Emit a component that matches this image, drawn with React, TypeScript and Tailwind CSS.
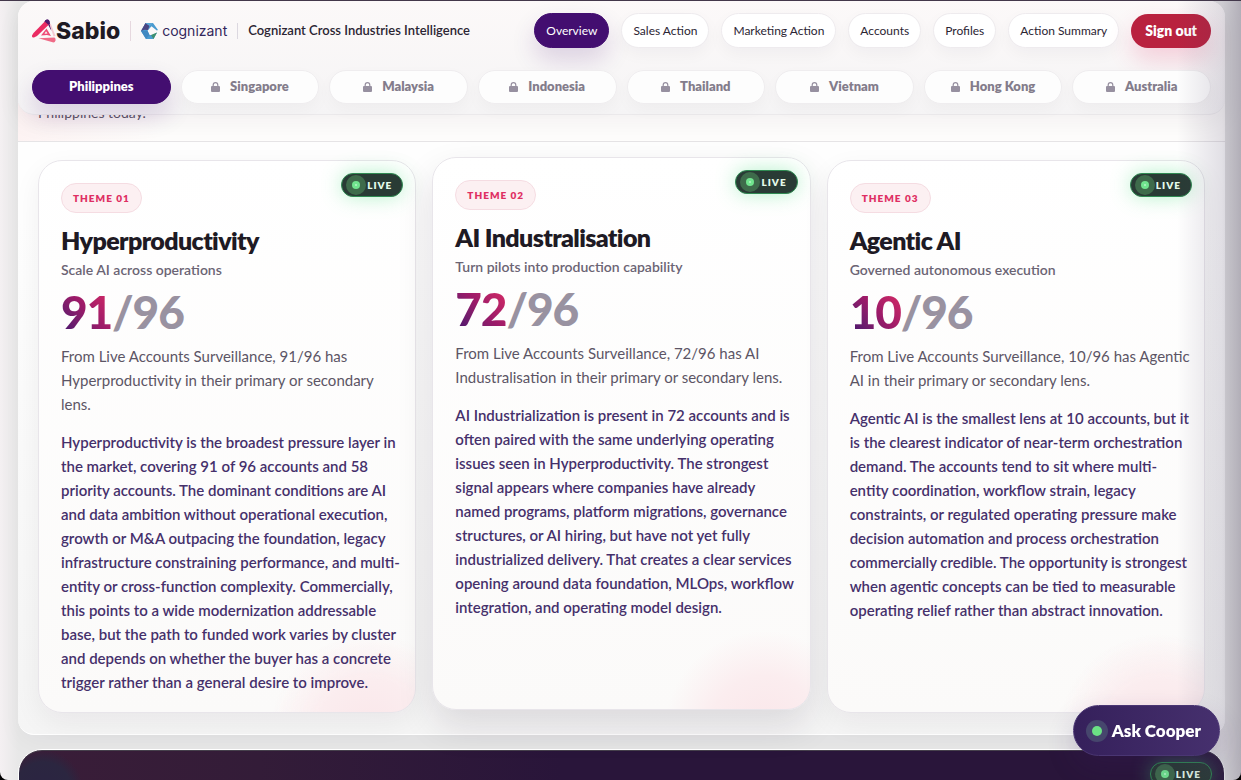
type Theme = {
  tag: string;
  title: string;
  subtitle: string;
  count: number;
  summary: string;
  detail: string;
  raised?: boolean;
};

const NAV = ["Overview", "Sales Action", "Marketing Action", "Accounts", "Profiles", "Action Summary"];
const MARKETS = ["Philippines", "Singapore", "Malaysia", "Indonesia", "Thailand", "Vietnam", "Hong Kong", "Australia"];

// Copy keeps its own line breaks, rendered with whitespace-pre-line
const THEMES: Theme[] = [
  {
    tag: "THEME 01",
    title: "Hyperproductivity",
    subtitle: "Scale AI across operations",
    count: 91,
    summary: `From Live Accounts Surveillance, 91/96 has
Hyperproductivity in their primary or secondary
lens.`,
    detail: `Hyperproductivity is the broadest pressure layer in
the market, covering 91 of 96 accounts and 58
priority accounts. The dominant conditions are AI
and data ambition without operational execution,
growth or M&A outpacing the foundation, legacy
infrastructure constraining performance, and multi-
entity or cross-function complexity. Commercially,
this points to a wide modernization addressable
base, but the path to funded work varies by cluster
and depends on whether the buyer has a concrete
trigger rather than a general desire to improve.`,
  },
  {
    tag: "THEME 02",
    title: "AI Industralisation",
    subtitle: "Turn pilots into production capability",
    count: 72,
    summary: `From Live Accounts Surveillance, 72/96 has AI
Industralisation in their primary or secondary lens.`,
    detail: `AI Industrialization is present in 72 accounts and is
often paired with the same underlying operating
issues seen in Hyperproductivity. The strongest
signal appears where companies have already
named programs, platform migrations, governance
structures, or AI hiring, but have not yet fully
industrialized delivery. That creates a clear services
opening around data foundation, MLOps, workflow
integration, and operating model design.`,
    raised: true,
  },
  {
    tag: "THEME 03",
    title: "Agentic AI",
    subtitle: "Governed autonomous execution",
    count: 10,
    summary: `From Live Accounts Surveillance, 10/96 has Agentic
AI in their primary or secondary lens.`,
    detail: `Agentic AI is the smallest lens at 10 accounts, but it
is the clearest indicator of near-term orchestration
demand. The accounts tend to sit where multi-
entity coordination, workflow strain, legacy
constraints, or regulated operating pressure make
decision automation and process orchestration
commercially credible. The opportunity is strongest
when agentic concepts can be tied to measurable
operating relief rather than abstract innovation.`,
  },
];

function SabioLogo() {
  return (
    <div className="flex items-center">
      <svg viewBox="0 0 24 24" className="size-6" aria-hidden="true">
        <path d="M12.500 2.500q.8-2 2.700-2 2 0 2.400 2.200L19.500 12l-3.500-6.500-3.500 3z" fill="#4f1a6e" />
        <path d="M12.800 2.600L17 5.500 5 17 2 18.500Q-.3 19 0 16.500L1.500 14z" fill="#ea2c63" />
        <path d="M12.800 2.600q.8-2 2.500-2 2 0 2.400 2.300L16.500 6z" fill="#4f1a6e" />
        <path d="M17.500 5l1.300-.2L23.500 17l-2 .5z" fill="#f5c9d2" />
        <path d="M14.500 9.500l4.500 7.500-4-1-6 .5z" fill="#ee4b76" />
        <path d="M14 12.300l1.500 2.300-3 .1z" fill="#fbf9f8" />
        <path d="M6.500 19.300l16-.8q1.500.8 1 3-.5 2-2 2z" fill="#ef6b87" />
      </svg>
      <span className="font-[Inter] text-[23px] leading-7 font-extrabold text-[#1e1a24]">Sabio</span>
    </div>
  );
}

function CognizantLogo() {
  return (
    <div className="flex items-center gap-1">
      <svg viewBox="0 0 17 16" className="h-4 w-[17px]" aria-hidden="true">
        <path d="M4.500 0H12l5 7-1.200.5L10.500 3.200 6.500 7.800l2 4.200h3L16 9.500 12.500 16H5L0 8z" fill="#4a9bd0" />
        <path d="M4.500 0L0 8l3.500-1.200L7 7l1.500-4.500z" fill="#4b4583" />
        <path d="M4.500 0H12L8.500 3z" fill="#5ba6d6" />
        <path d="M0 8l5 8 3.500-4-2-4.200z" fill="#4189c2" />
        <path d="M16 9.500L12.500 16 10 12z" fill="#3d8f6d" />
      </svg>
      <span className="font-[Inter] text-sm text-[#33275c]">cognizant</span>
    </div>
  );
}

function LockIcon() {
  return (
    <svg viewBox="0 0 9 10" className="h-2.5 w-[9px]" aria-hidden="true">
      <path d="M2.200 4.500V3a2.300 2.300 0 0 1 4.600 0v1.500" fill="none" stroke="#9790a0" strokeWidth="1.200" />
      <rect y="4" width="9" height="6" rx="1" fill="#9790a0" />
    </svg>
  );
}

function LiveBadge() {
  return (
    <span className="flex h-6 items-center rounded-full border border-[#2f8a52] bg-[#293b35] pr-2.5 pl-1 text-[10px] font-extrabold tracking-widest text-[#e4fbea] shadow-[0_0_20px_rgba(74,222,128,0.4)]">
      <span className="flex size-5 items-center justify-center rounded-full bg-[#3e6b4b]">
        <span className="flex size-2 items-center justify-center rounded-full bg-[#70e48e]">
          <span className="size-0.5 rounded-full bg-[#b6f5c6]" />
        </span>
      </span>
      <span className="ml-px leading-3">LIVE</span>
    </span>
  );
}

function ThemeCard({ theme }: { theme: Theme }) {
  return (
    <article
      className={`relative rounded-3xl border border-[#e8e5ea] bg-[radial-gradient(circle_at_88%_104%,#fae6e9_0,#fbedef_55px,transparent_100px),linear-gradient(#ffffff,#fbfaf9)] pt-[22px] pr-3 pb-[18px] pl-[22px] ${
        theme.raised ? "-translate-y-[3px] shadow-[0_16px_36px_rgba(30,20,40,0.12)]" : "shadow-[0_10px_28px_rgba(30,20,40,0.06)]"
      }`}
    >
      <div className="absolute top-3 right-3">
        <LiveBadge />
      </div>
      <span className="flex h-[30px] w-fit items-center rounded-full border border-[#f5dce2] bg-[#fcf0f2] px-[11px] text-[10px] font-extrabold tracking-widest text-[#df2f63]">
        {theme.tag}
      </span>
      <h2 className="mt-[11px] text-[25px] leading-8 font-extrabold tracking-tight text-[#1e1a24]">{theme.title}</h2>
      <p className="mt-1 text-sm font-semibold text-[#6b6474]">{theme.subtitle}</p>
      <p className="mt-2 text-[46px] leading-12 font-black tracking-tight text-[#9992a1]">
        <span className="bg-linear-to-tr from-[#3c0c6e] via-[#9a1a69] to-[#e22c62] bg-clip-text text-transparent">
          {theme.count}
        </span>
        /96
      </p>
      <p className="mt-2 text-[15px] leading-6 whitespace-pre-line text-[#5c5565]">{theme.summary}</p>
      <p className="mt-3.5 text-[15px] leading-6 font-semibold whitespace-pre-line text-[#45306b]">{theme.detail}</p>
    </article>
  );
}

export default function App() {
  return (
    <div className="h-screen overflow-hidden bg-black">
      <div className="relative h-full overflow-hidden rounded-b-lg border-t border-[#43384b] bg-[linear-gradient(to_right,#f4f0f2,#e8e8e8_18px)] pr-4 pl-[18px] font-[Lato,sans-serif]">
        <div className="rounded-2xl border-b border-white bg-linear-to-b from-[#fefefe] from-30% to-[#f5f5f5] shadow-[0_8px_24px_rgba(30,20,40,0.04)]">
          <header className="relative z-10 rounded-2xl border-b border-[#ebe9eb] bg-linear-to-b from-[#fcf9f9] to-[#f5f4f5] px-3.5 pt-3 pb-2.5 shadow-[0_8px_24px_rgba(30,20,40,0.05)]">
            <div className="flex items-center justify-between">
              <div className="flex items-center">
                <SabioLogo />
                <span className="mx-2.5 h-5 w-px bg-[#e6d8df]" />
                <CognizantLogo />
                <span className="mx-2.5 h-4 w-px bg-[#dcd8e0]" />
                <span className="text-[13px] font-semibold text-[#2b2533]">Cognizant Cross Industries Intelligence</span>
              </div>
              <nav className="flex items-center gap-3" aria-label="Sections">
                {NAV.map((item, i) => (
                  <button
                    key={item}
                    type="button"
                    className={`h-[35px] rounded-full border px-[11px] text-xs ${
                      i === 0
                        ? "border-[#430e70] bg-[#430e70] text-white shadow-[0_12px_24px_rgba(67,14,112,0.16)]"
                        : "border-[#eeebee] bg-white text-[#2b2533] shadow-[0_6px_16px_rgba(30,20,40,0.04)]"
                    }`}
                  >
                    {item}
                  </button>
                ))}
                <button
                  type="button"
                  className="h-[34px] rounded-full bg-[#b9223f] px-3.5 text-sm font-extrabold text-white shadow-[0_12px_24px_rgba(226,44,98,0.2)]"
                >
                  Sign out
                </button>
              </nav>
            </div>
            <nav className="mt-[22px] grid grid-cols-8 gap-2.5" aria-label="Markets">
              {MARKETS.map((market, i) => (
                <button
                  key={market}
                  type="button"
                  disabled={i > 0}
                  className={`flex h-[34px] items-center justify-center gap-2.5 rounded-full border text-[13px] font-extrabold ${
                    i === 0
                      ? "border-[#430e70] bg-[#430e70] text-white shadow-[0_12px_24px_rgba(67,14,112,0.16)]"
                      : "border-[#efedef] bg-[#fdfdfd] text-[#837c8b] shadow-[0_6px_16px_rgba(30,20,40,0.03)]"
                  }`}
                >
                  {i > 0 && <LockIcon />}
                  {market}
                </button>
              ))}
            </nav>
          </header>
          <section className="-mt-3 h-[39px] border-b border-[#e6e4e6] bg-[linear-gradient(to_right,#fdf3f3,#fefdfc_140px)] px-5">
            <p className="text-sm text-[#5c5565]">Philippines today.</p>
          </section>
          <main className="grid grid-cols-3 gap-4 px-5 pt-[18px] pb-[21px]">
            {THEMES.map((theme) => (
              <ThemeCard key={theme.tag} theme={theme} />
            ))}
          </main>
        </div>
        <section className="mt-3.5 flex h-60 items-start justify-end rounded-3xl border border-white bg-[radial-gradient(circle_at_24px_40px,#2b2442_0,#2b2640_28px,transparent_40px),linear-gradient(to_right,#3a1d38,#331c38_20%,#29153a_45%)] px-3 pt-3 shadow-[inset_0_1px_0_#46404c]">
          <LiveBadge />
        </section>
        {/* shade along the right edge of the window */}
        <div className="pointer-events-none absolute inset-y-0 right-0 z-10 w-16 bg-linear-to-r from-transparent via-[#4b406428] via-70% to-[#3c324f50]" />
        <button
          type="button"
          className="fixed right-[21px] bottom-6 z-20 flex h-[51px] items-center gap-1 rounded-full border border-[#4a3673] bg-linear-to-r from-[#35205b] to-[#46306e] pr-[18px] pl-3 text-[17px] font-extrabold text-white shadow-[0_12px_28px_rgba(60,30,100,0.2)]"
        >
          <span className="flex size-[22px] items-center justify-center rounded-full bg-[#46466d]">
            <span className="size-2.5 rounded-full bg-[#6be285]" />
          </span>
          Ask Cooper
        </button>
      </div>
    </div>
  );
}
